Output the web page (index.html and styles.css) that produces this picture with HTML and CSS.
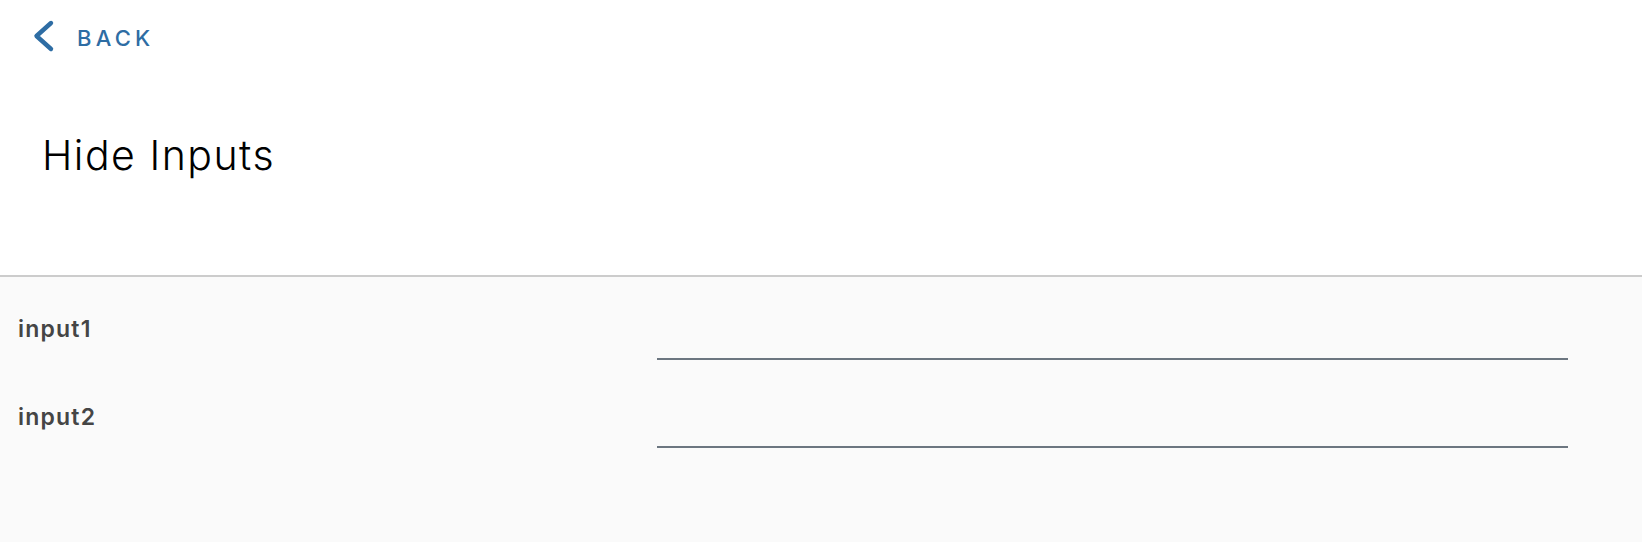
FILE: index.html
```html
<!DOCTYPE html>
<html lang="en">
<head>
<meta charset="utf-8">
<title>Hide Inputs</title>
<link rel="stylesheet" href="styles.css">
</head>
<body>
  <header class="header">
    <a class="back" href="#">
      <svg class="back-icon" width="22" height="34" viewBox="0 0 22 34" aria-hidden="true">
        <polyline points="18,4 3.5,17 18,30" fill="none" stroke="currentColor" stroke-width="4.4" stroke-linecap="round" stroke-linejoin="round"/>
      </svg>
      <span class="back-text">BACK</span>
    </a>
    <h1 class="title">Hide Inputs</h1>
  </header>
  <main class="form">
    <div class="row">
      <label class="label" for="input1">input1</label>
      <div class="field"><input class="input" id="input1" type="text"></div>
    </div>
    <div class="row">
      <label class="label" for="input2">input2</label>
      <div class="field"><input class="input" id="input2" type="text"></div>
    </div>
  </main>
</body>
</html>
```

FILE: styles.css
```css
html, body {
  margin: 0;
  padding: 0;
}

body {
  font-family: Inter, "Liberation Sans", sans-serif;
  background: #fafafa;
  min-height: 542px;
}

.header {
  background: #ffffff;
  box-sizing: border-box;
  border-bottom: 2px solid #cccccc;
  height: 277px;
}

.back {
  display: flex;
  align-items: center;
  height: 72px;
  padding-left: 33px;
  color: #2e6da4;
  text-decoration: none;
}

.back-icon {
  display: block;
  flex: none;
}

.back-text {
  margin-left: 22px;
  margin-top: 3px;
  font-size: 22px;
  line-height: 24px;
  font-weight: 500;
  letter-spacing: 4.2px;
}

.title {
  margin: 59px 0 0 0;
  padding-left: 42px;
  font-size: 41px;
  line-height: 48px;
  font-weight: 300;
  letter-spacing: 1.5px;
  color: #000000;
}

.form {
  padding: 24px 74px 0 18px;
}

.row {
  display: grid;
  grid-template-columns: 639px 1fr;
  height: 64px;
  margin-bottom: 24px;
}

.label {
  padding-top: 16px;
  font-size: 23px;
  line-height: 24px;
  font-weight: 600;
  letter-spacing: 1.2px;
  color: #454545;
}

.field {
  display: flex;
}

.input {
  width: 100%;
  height: 59px;
  box-sizing: border-box;
  margin: 0;
  padding: 0;
  border: none;
  border-bottom: 2px solid #6c7680;
  background: transparent;
  font-family: inherit;
  font-size: 18px;
  outline: none;
}
```
